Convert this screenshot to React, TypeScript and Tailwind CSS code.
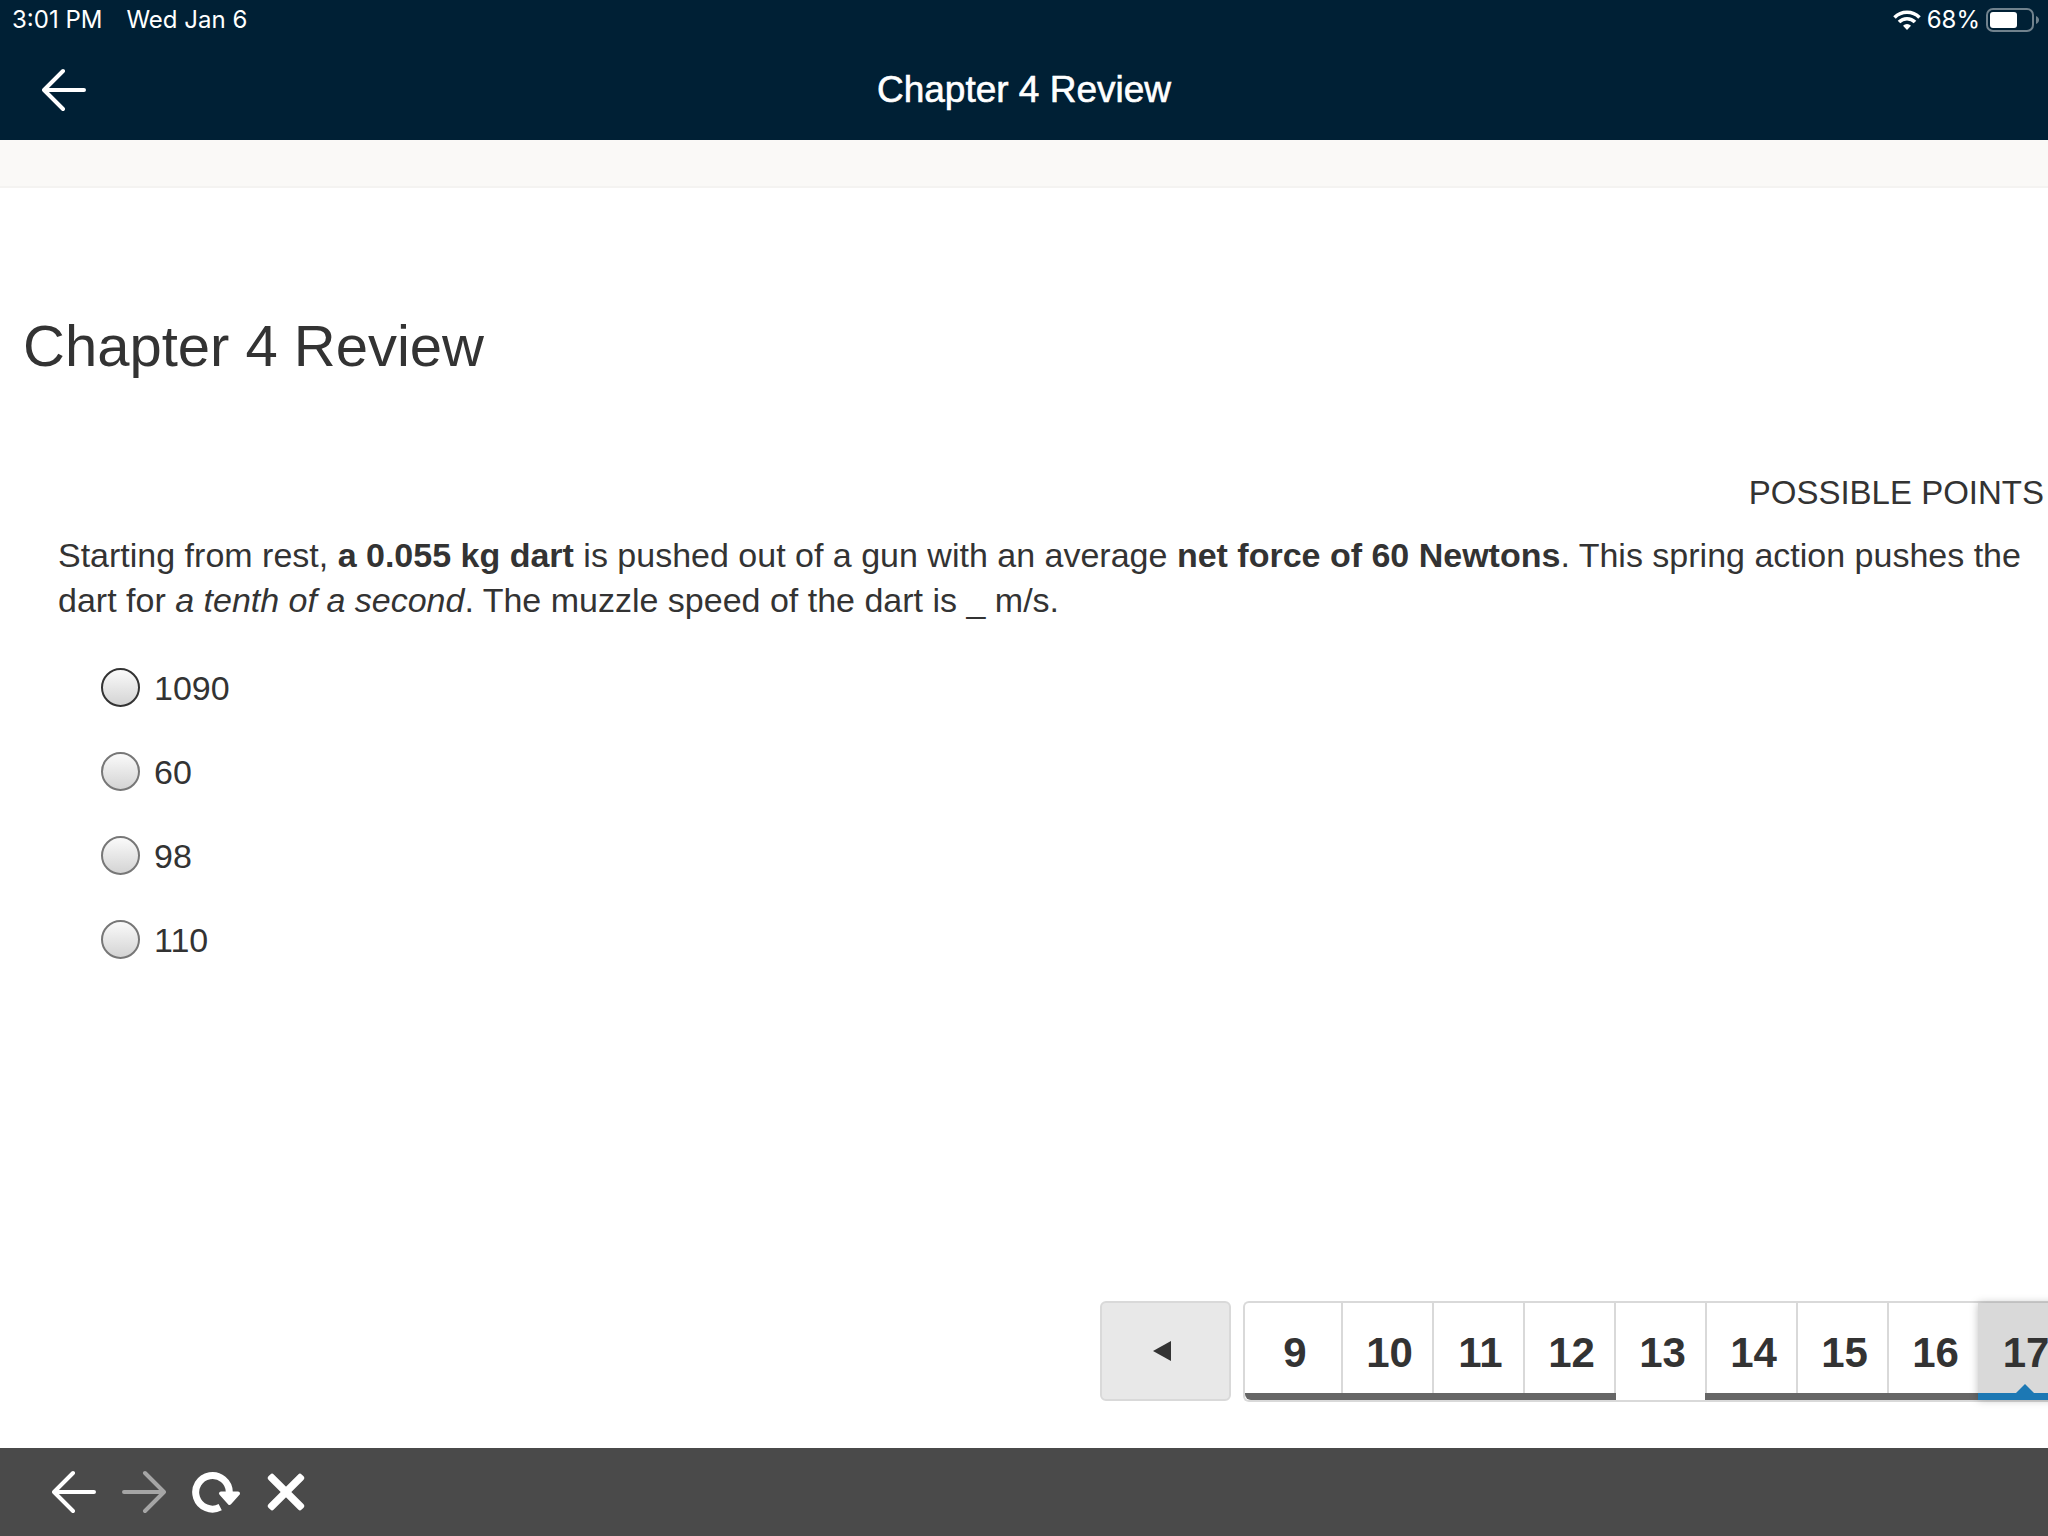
import React, { useState } from 'react';

const answers = ['1090', '60', '98', '110'];

const pages = [
  { n: 9, answered: true },
  { n: 10, answered: true },
  { n: 11, answered: true },
  { n: 12, answered: true },
  { n: 13, answered: false },
  { n: 14, answered: true },
  { n: 15, answered: true },
  { n: 16, answered: true },
];

function ArrowIcon({ flip = false }: { flip?: boolean }) {
  return (
    <svg
      viewBox="0 0 44 44"
      className={flip ? 'size-11 -scale-x-100' : 'size-11'}
      fill="none"
      stroke="currentColor"
      strokeWidth="4"
      strokeLinecap="round"
      strokeLinejoin="round"
      aria-hidden="true"
    >
      <path d="M21 3 2 22l19 19M3 22h39" />
    </svg>
  );
}

function WifiIcon() {
  return (
    <svg viewBox="0 0 28 20" className="h-5 w-7" fill="none" stroke="currentColor" strokeWidth="3.6" aria-hidden="true">
      <path d="M1.500 7.400a17.700 17.700 0 0 1 25 0" />
      <path d="M6 12a11.300 11.300 0 0 1 16 0" />
      <path d="M14 20l-4-4.200a5.600 5.600 0 0 1 8 0z" fill="currentColor" stroke="none" />
    </svg>
  );
}

function BatteryIcon() {
  return (
    <svg viewBox="0 0 54 24" className="h-6 w-[54px]" aria-hidden="true">
      <rect x="1" y="1" width="46" height="22" rx="6" fill="none" stroke="#71828d" strokeWidth="2" />
      <rect x="4" y="4" width="27" height="16" rx="3" fill="#fff" />
      <path d="M50 8c4 1.500 4 6.500 0 8z" fill="#71828d" />
    </svg>
  );
}

function ReloadIcon() {
  return (
    <svg viewBox="0 0 48 42" className="h-[42px] w-12" aria-hidden="true">
      <path d="M28.200 36.200A16.800 16.800 0 1 1 37.300 21" fill="none" stroke="currentColor" strokeWidth="7" />
      <path d="M29 22.500h17L37.500 32z" fill="currentColor" stroke="currentColor" strokeWidth="4" strokeLinejoin="round" />
    </svg>
  );
}

function CloseIcon() {
  return (
    <svg viewBox="0 0 40 40" className="size-10" aria-hidden="true">
      <g fill="currentColor" transform="rotate(45 20 20)">
        <rect x="-3.500" y="16.200" width="47" height="7.600" rx="2.400" />
        <rect x="16.200" y="-3.500" width="7.600" height="47" rx="2.400" />
      </g>
    </svg>
  );
}

export default function App() {
  const [choice, setChoice] = useState<string | null>(null);

  return (
    <div className="flex min-h-screen flex-col overflow-x-hidden bg-white font-['Liberation_Sans',Arial,sans-serif] text-[#333]">
      <header className="bg-[#002035] text-white">
        <div className="flex h-10 items-center justify-between pl-3 pr-2 font-['Inter',sans-serif] text-2xl">
          <div className="flex gap-6">
            <span>3:01 PM</span>
            <span>Wed Jan 6</span>
          </div>
          <div className="flex items-center gap-[6px]">
            <WifiIcon />
            <span>68%</span>
            <BatteryIcon />
          </div>
        </div>
        <div className="grid h-[100px] grid-cols-[1fr_auto_1fr] items-center px-[42px]">
          <button type="button" aria-label="Back" className="justify-self-start">
            <ArrowIcon />
          </button>
          <div className="text-[37px] leading-[48px] [-webkit-text-stroke:0.6px_white]">Chapter 4 Review</div>
        </div>
      </header>

      <div className="h-12 border-b-2 border-[#f4f3f1] bg-[#faf9f7]" />

      <main className="flex flex-1 flex-col pb-[46px] pt-[122px]">
        <h1 className="px-[23px] text-[58px] leading-[72px]">Chapter 4 Review</h1>

        <div className="mt-[87px] pr-1 text-right text-[33px] leading-[48px]">POSSIBLE POINTS</div>

        <p className="mt-4 whitespace-nowrap pl-[58px] text-[34px] leading-[45px]">
          Starting from rest, <strong>a 0.055 kg dart</strong> is pushed out of a gun with an average{' '}
          <strong>net force of 60 Newtons</strong>. This spring action pushes the
          <br />
          dart for <em>a tenth of a second</em>. The muzzle speed of the dart is _ m/s.
        </p>

        <fieldset className="mt-[45px] flex flex-col items-start gap-[45px] pl-[101px]">
          {answers.map((answer, i) => (
            <label key={answer} className="flex h-[39px] items-center gap-[14px] text-[34px] leading-[41px]">
              <input
                type="radio"
                name="answer"
                value={answer}
                checked={choice === answer}
                onChange={() => setChoice(answer)}
                className={
                  i === 0
                    ? 'size-[39px] appearance-none rounded-full border-2 border-[#333] bg-linear-to-b from-[#fafafa] to-[#d4d4d4] checked:to-[#777]'
                    : 'size-[39px] appearance-none rounded-full border-2 border-[#777] bg-linear-to-b from-[#fafafa] to-[#d4d4d4] checked:to-[#777]'
                }
              />
              <span className="pt-[2px]">{answer}</span>
            </label>
          ))}
        </fieldset>

        <nav aria-label="Questions" className="-mr-[22px] mt-auto flex justify-end gap-3 text-[42px] font-bold">
          <button
            type="button"
            aria-label="Previous questions"
            className="flex h-[100px] w-[131px] items-center justify-center rounded-md border-2 border-[#d9d9d9] bg-[#e8e8e8] pr-2"
          >
            <svg viewBox="0 0 18 20" className="h-5 w-[18px]" aria-hidden="true">
              <path d="M0 10 18 0v20z" fill="#333" />
            </svg>
          </button>
          <div className="flex h-[101px] rounded-l-md border-y-2 border-l-2 border-[#d9d9d9]">
            {pages.map(({ n, answered }) => (
              <button
                key={n}
                type="button"
                className={
                  'relative pl-1 pt-[2px] ' +
                  (n === 9
                    ? 'w-24 after:left-0 after:rounded-bl-md '
                    : 'w-[91px] border-l-2 border-[#d9d9d9] after:-left-[2px] ') +
                  (answered
                    ? "z-10 after:absolute after:bottom-0 after:-right-[2px] after:h-[7px] after:bg-[#666] after:content-['']"
                    : '')
                }
              >
                {n}
              </button>
            ))}
            <button
              type="button"
              aria-current="page"
              className="relative z-20 w-[92px] border-b-[7px] border-[#1c78b4] bg-[#d9d9d9] pl-1 pt-[9px] shadow-[0_0_8px_rgba(0,0,0,0.25)]"
            >
              17
              <svg viewBox="0 0 18 9" className="absolute bottom-0 left-[38px] h-[9px] w-[18px]" aria-hidden="true">
                <path d="M0 9 9 0l9 9z" fill="#1c78b4" />
              </svg>
            </button>
          </div>
        </nav>
      </main>

      <footer className="flex h-[88px] items-center bg-[#4a4a4a] pl-[52px] text-white">
        <div className="flex items-center gap-[26px]">
          <button type="button" aria-label="Go back">
            <ArrowIcon />
          </button>
          <button type="button" aria-label="Go forward" className="text-[#a5a5a5]">
            <ArrowIcon flip />
          </button>
          <button type="button" aria-label="Reload">
            <ReloadIcon />
          </button>
          <button type="button" aria-label="Stop">
            <CloseIcon />
          </button>
        </div>
      </footer>
    </div>
  );
}
